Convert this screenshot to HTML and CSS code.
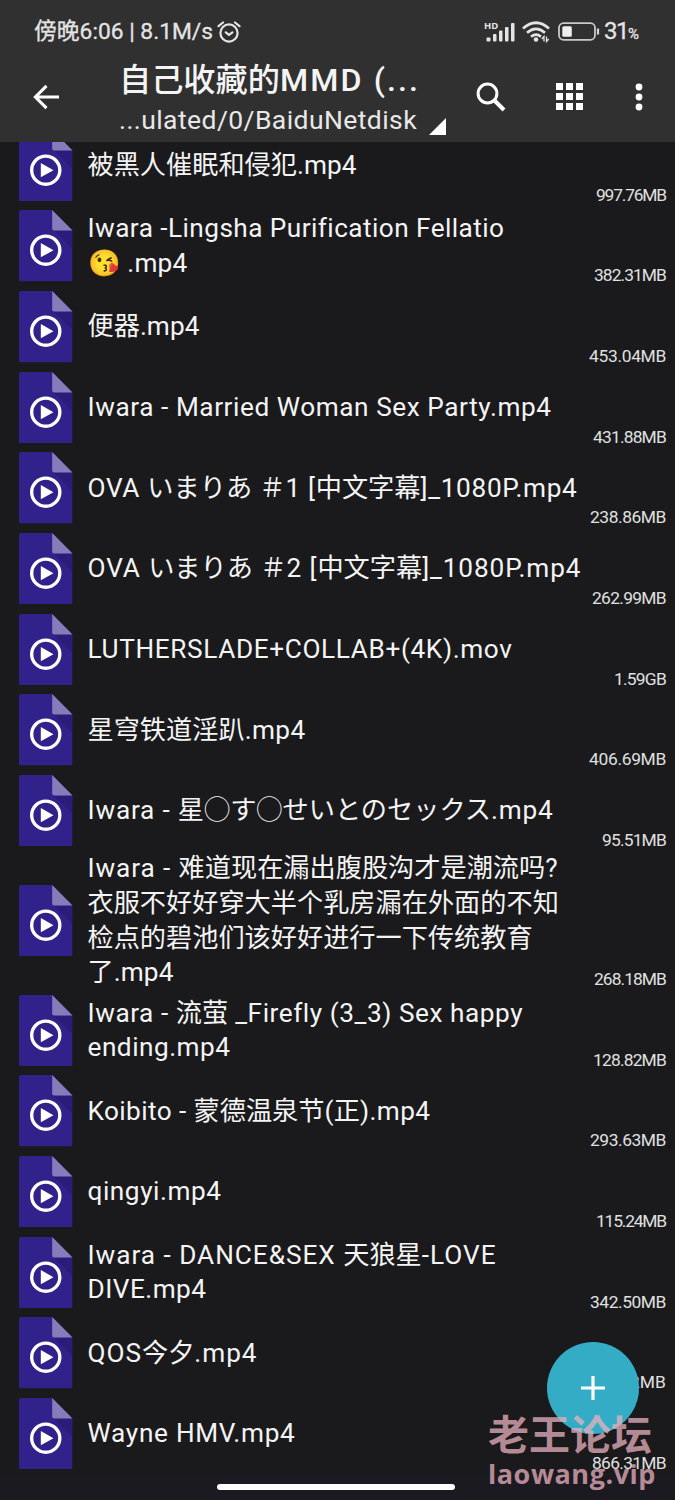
FILE: index.html
```html
<!DOCTYPE html>
<html lang="zh-CN">
<head>
<meta charset="utf-8">
<title>BaiduNetdisk</title>
<link rel="stylesheet" href="styles.css">
</head>
<body>
<svg class="defs" width="0" height="0" aria-hidden="true">
  <symbol id="video" viewBox="0 0 54 72">
    <path fill="#30228a" d="M2 0H33.500L54 20.500V70q0 2-2 2H2q-2 0-2-2V2q0-2 2-2z"/>
    <path fill="#291d79" d="M35 20.500H54V39z"/>
    <path fill="#877bb9" d="M33.500 0L54 20.500H35.500q-2 0-2-2z"/>
    <circle cx="27" cy="40.500" r="14.200" fill="none" stroke="#fff" stroke-width="3.400"/>
    <path fill="#fff" d="M22 33.300v14.400L34.800 40.500z"/>
  </symbol>
</svg>
<div class="phone">
  <header class="top">
    <div class="status">
      <div class="status-left">
        <span class="clock" data-width="179">傍晚6:06 | 8.1M/s</span>
        <svg class="alarm" viewBox="0 0 24 22"><g fill="none" stroke="#e4e4e4" stroke-width="2.200" stroke-linecap="round"><circle cx="12" cy="12" r="8.600"/><path d="M8.800 11.300l3.200 2.500 3.400-2.500M1.500 5.200L6 1.500M18 1.500l4.500 3.700"/></g></svg>
      </div>
      <div class="status-right">
        <svg class="signal" viewBox="0 0 32 22"><g fill="#e4e4e4"><rect x="2.500" y="16.500" width="4" height="4" rx="1"/><rect x="9" y="13" width="3.500" height="7.500" rx="1"/><rect x="15" y="9.500" width="3.500" height="11" rx="1"/><rect x="21" y="6" width="3.500" height="14.500" rx="1"/><rect x="27" y="2" width="3.500" height="18.500" rx="1"/></g><text x="0" y="7.800" class="hd">HD</text></svg>
        <svg class="wifi" viewBox="0 0 28 22"><g fill="none" stroke="#e4e4e4" stroke-width="2.700"><path d="M1 7.500Q14-4 27 7.500M5 11.800Q14 4 23 11.800M9 15.700Q14 11.500 19 15.700"/></g><circle cx="14" cy="18.500" r="2.300" fill="#e4e4e4"/><path d="M22 20.500v-5l-2.200 2.500M24.500 15.500v5l2.200-2.500" fill="none" stroke="#e4e4e4" stroke-width="1.300"/></svg>
        <svg class="battery" viewBox="0 0 42 20"><rect x="1" y="1.200" width="36" height="16.600" rx="4.500" fill="none" stroke="#c9c9c9" stroke-width="1.800"/><rect x="4.300" y="4.300" width="9.500" height="10.400" rx="1.500" fill="#eee"/><path d="M40 6.500v6" stroke="#d5d5d5" stroke-width="2.200"/></svg>
        <span class="percent">31<small>%</small></span>
      </div>
    </div>
    <div class="toolbar">
      <svg class="back" viewBox="0 0 28 26"><path d="M27 13H3M14 1.500L2.500 13 14 24.500" fill="none" stroke="#fff" stroke-width="3.200"/></svg>
      <div class="location">
        <div class="title" data-width="301">自己收藏的MMD (...</div>
        <div class="path" data-width="298">...ulated/0/BaiduNetdisk</div>
      </div>
      <svg class="corner" viewBox="0 0 17 17"><path d="M17 0V17H0z" fill="#fff"/></svg>
      <svg class="search" viewBox="0 0 30 30"><circle cx="11.500" cy="11.500" r="9.400" fill="none" stroke="#fff" stroke-width="3"/><path d="M18 18L28 28" stroke="#fff" stroke-width="4"/></svg>
      <svg class="grid" viewBox="0 0 27 27"><path fill="#fff" d="M0 0h7v7H0zM10 0h7v7h-7zM20 0h7v7h-7zM0 10h7v7H0zM10 10h7v7h-7zM20 10h7v7h-7zM0 20h7v7H0zM10 20h7v7h-7zM20 20h7v7h-7z"/></svg>
      <svg class="more" viewBox="0 0 8 28"><g fill="#fff"><circle cx="4" cy="4" r="3.400"/><circle cx="4" cy="14" r="3.400"/><circle cx="4" cy="24" r="3.400"/></g></svg>
    </div>
  </header>
  <main class="files" id="files"></main>
  <footer class="nav"><div class="home"></div></footer>
  <button class="fab" aria-label="add"><svg viewBox="0 0 24 24"><path d="M12 0v24M0 12h24" stroke="#fff" stroke-width="3.200"/></svg></button>
  <div class="watermark"><div class="wm-name">老王论坛</div><div class="wm-site" data-width="168">laowang.vip</div></div>
</div>
<script src="app.js"></script>
</body>
</html>
```
FILE: styles.css
```css
* { box-sizing: border-box; }
body { margin: 0; background: #1a1a1c; }
.defs { position: absolute; }
svg { display: block; flex: none; }
.phone {
  position: relative;
  width: 675px;
  height: 1500px;
  overflow: hidden;
  display: flex;
  flex-direction: column;
  background: #1a1a1c;
  color: #f4f4f4;
  font-family: Roboto, "Noto Sans CJK SC", sans-serif;
}
.top { height: 142px; flex: none; background: #303030; }
.status {
  height: 62px;
  padding: 2px 36px 0 34px;
  display: flex;
  align-items: center;
  justify-content: space-between;
  color: #e4e4e4;
}
.status-left, .status-right { display: flex; align-items: center; }
.status-left { gap: 4px; }
.clock { font-size: 22.800px; line-height: 30px; font-weight: 400; -webkit-text-stroke: .3px #e4e4e4; white-space: nowrap; }
.alarm { width: 24px; height: 22px; }
.signal { width: 32px; height: 22px; margin-right: 6px; overflow: visible; }
.hd { font: 700 9.500px "Open Sans", sans-serif; fill: #e4e4e4; }
.wifi { width: 28px; height: 22px; margin-right: 8px; }
.battery { width: 42px; height: 20px; margin-right: 4px; }
.percent { font-size: 24px; line-height: 28px; letter-spacing: -1.500px; font-weight: 400; -webkit-text-stroke: .3px #e4e4e4; width: 35px; white-space: nowrap; }
.percent small { font-size: 15px; }
.toolbar { height: 80px; padding-left: 33px; display: flex; align-items: flex-start; }
.back { width: 27px; height: 26px; margin: 22px 60px 0 0; }
.location { width: 309px; }
.title { height: 38px; font-size: 32.200px; line-height: 37px; font-weight: 500; white-space: nowrap; }
.path { height: 38px; font-size: 26.500px; line-height: 40px; white-space: nowrap; color: #e8e8e8; }
.title .run, .path .run { margin-left: -1px; }
.corner { width: 17px; height: 17px; margin-top: 56px; }
.search { width: 30px; height: 30px; margin: 20px 0 0 30px; }
.grid { width: 27px; height: 27px; margin: 21px 0 0 50px; }
.more { width: 8px; height: 28px; margin: 21px 0 0 52px; }
.files {
  height: 1331.900px;
  flex: none;
  overflow: hidden;
  display: flex;
  flex-direction: column;
  justify-content: flex-end;
}
.row {
  flex: none;
  min-height: 80.650px;
  padding: 0 9px 0 19px;
  display: flex;
  align-items: center;
}
.row.tall { height: 139.100px; }
.thumb { width: 53.500px; height: 71.500px; margin-right: 15px; }
.name { font-size: 26.200px; line-height: 34.700px; white-space: nowrap; flex: 1; min-width: 0; }
.line { height: 34.700px; }
.size {
  align-self: flex-end;
  width: 0;
  display: flex;
  justify-content: flex-end;
  font-size: 17.400px;
  line-height: 20px;
  padding-bottom: 1px;
  white-space: nowrap;
  color: #e0e0e0;
}
.nav { flex: 1; background: #1b1a20; display: flex; justify-content: center; padding-top: 10px; }
.home { width: 238px; height: 6.500px; border-radius: 4px; background: #fff; margin-right: 3px; }
.fab {
  position: absolute;
  left: 547px;
  top: 1342px;
  width: 92px;
  height: 92px;
  padding: 0;
  border: 0;
  border-radius: 50%;
  background: #34acc6;
  display: grid;
  place-items: center;
}
.fab svg { width: 24px; height: 24px; }
.watermark {
  position: absolute;
  left: 488px;
  top: 1407px;
  color: rgba(232, 177, 190, .77);
  font-weight: 700;
  white-space: nowrap;
}
.wm-name { font: 700 41px/50px "Noto Sans CJK SC", sans-serif; }
.wm-site { font: 700 27px/34px "Open Sans", sans-serif; }
```
FILE: app.js
```js
// Each file: [[text, line width], ...], size label, size label width.
const files = [
  [[['被黑人催眠和侵犯.mp4', 269]], '997.76MB', 70],
  [[['Iwara -Lingsha Purification Fellatio', 416], ['😘 .mp4', 100]], '382.31MB', 72],
  [[['便器.mp4', 112]], '453.04MB', 77],
  [[['Iwara - Married Woman Sex Party.mp4', 464]], '431.88MB', 73],
  [[['OVA いまりあ ＃1 [中文字幕]_1080P.mp4', 490]], '238.86MB', 76],
  [[['OVA いまりあ ＃2 [中文字幕]_1080P.mp4', 494]], '262.99MB', 74],
  [[['LUTHERSLADE+COLLAB+(4K).mov', 425]], '1.59GB', 52],
  [[['星穹铁道淫趴.mp4', 218]], '406.69MB', 77],
  [[['Iwara - 星◯す◯せいとのセックス.mp4', 466]], '95.51MB', 64],
  [[['Iwara - 难道现在漏出腹股沟才是潮流吗?', 471], ['衣服不好好穿大半个乳房漏在外面的不知', 471], ['检点的碧池们该好好进行一下传统教育', 445], ['了.mp4', 86]], '268.18MB', 72],
  [[['Iwara - 流萤 _Firefly (3_3) Sex happy', 435], ['ending.mp4', 143]], '128.82MB', 73],
  [[['Koibito - 蒙德温泉节(正).mp4', 343]], '293.63MB', 76],
  [[['qingyi.mp4', 134]], '115.24MB', 70],
  [[['Iwara - DANCE&SEX 天狼星-LOVE', 409], ['DIVE.mp4', 119]], '342.50MB', 76],
  [[['QOS今夕.mp4', 170]], '2MB', 36],
  [[['Wayne HMV.mp4', 208]], '866.31MB', 74],
];

function element(tag, className, text) {
  const node = document.createElement(tag);
  node.className = className;
  if (text) node.textContent = text;
  return node;
}

// Tracks the Latin runs of a line so that the line takes the given width.
function fit(node) {
  const target = Number(node.dataset.width);
  const parts = node.textContent.split(/([\x20-\x7e]+)/).filter(Boolean);
  const inner = element('span', 'run');
  let count = 0;
  const latin = [];
  for (const part of parts) {
    const span = element('span', 'part', part);
    if (/^[\x20-\x7e]/.test(part)) { latin.push(span); count += part.length; }
    inner.append(span);
  }
  node.replaceChildren(inner);
  if (!count) return;
  const spacing = (target - inner.getBoundingClientRect().width) / count;
  for (const span of latin) span.style.letterSpacing = spacing.toFixed(3) + 'px';
}

const list = document.getElementById('files');
for (const [lines, size, sizeWidth] of files) {
  const row = element('div', lines.length > 2 ? 'row tall' : 'row');
  row.innerHTML = '<svg class="thumb"><use href="#video"/></svg>';
  const name = element('div', 'name');
  for (const [text, width] of lines) {
    const line = element('div', 'line', text);
    line.dataset.width = width;
    name.append(line);
  }
  const label = element('div', 'size', size);
  label.dataset.width = sizeWidth;
  row.append(name, label);
  list.append(row);
}
document.querySelectorAll('[data-width]').forEach(fit);
```
